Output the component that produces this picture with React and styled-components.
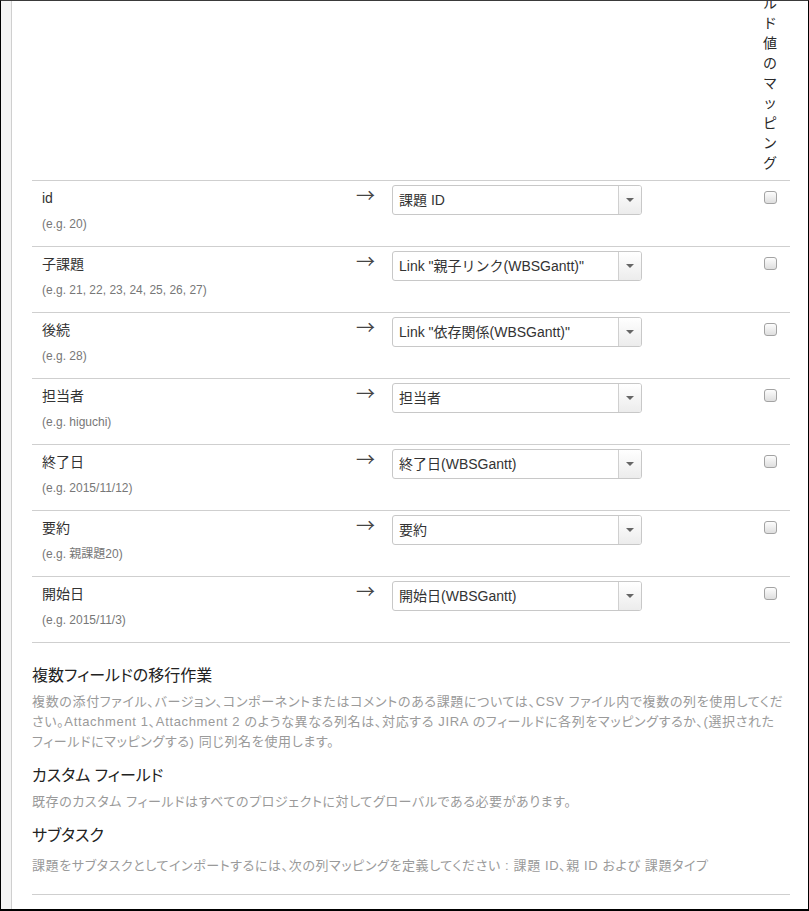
import React from "react";
import styled, { createGlobalStyle } from "styled-components";

const Global = createGlobalStyle`
  html, body { margin: 0; padding: 0; background: #fff; }
  body { font-family: "Liberation Sans", "Noto Sans CJK JP", sans-serif; color: #333; }
  * { box-sizing: border-box; }
`;

const Frame = styled.div`
  width: 809px;
  height: 911px;
  border-top: 1px solid #3a3a3a;
  border-left: 1px solid #000;
  border-right: 1px solid #000;
  border-bottom: 2px solid #000;
  display: flex;
  overflow: hidden;
`;

const Strip = styled.div`
  width: 11px;
  flex: none;
  background: #f4f4f4;
  border-right: 1px solid #cfcfcf;
`;

const Main = styled.div`
  flex: 1;
  padding: 0 18px 0 20px;
  min-width: 0;
`;

const Grid = styled.div`
  display: grid;
  grid-template-columns: 318px 42px 250px 1fr 40px;
  align-items: start;
`;

const HeadRow = styled(Grid)`
  margin-top: -68px;
  padding-bottom: 7px;
`;

const HeadCell = styled.div`
  grid-column: 5;
  justify-self: center;
  width: 16px;
  word-break: break-all;
  text-align: center;
  font-size: 14px;
  line-height: 20px;
  color: #2a2a2a;
`;

const Table = styled.div`
  border-bottom: 1px solid #cfcfcf;
`;

const Row = styled(Grid)`
  border-top: 1px solid #cfcfcf;
  height: 66px;
`;

const LabelCell = styled.div`
  padding: 7px 0 0 10px;
`;

const Label = styled.div`
  font-size: 14px;
  line-height: 20px;
  color: #333;
`;

const Example = styled.div`
  margin-top: 8px;
  font-size: 12px;
  line-height: 16px;
  color: #777;
`;

const Arrow = styled.div`
  padding: 4px 0 0 6px;
  font-family: "Noto Sans CJK JP", "DejaVu Sans", sans-serif;
  font-size: 19px;
  line-height: 20px;
  color: #444;
`;

const Select = styled.div`
  margin-top: 4px;
  height: 30px;
  border: 1px solid #c8c8c8;
  border-radius: 3px;
  display: flex;
  align-items: stretch;
  background: #fff;
  overflow: hidden;
`;

const SelectValue = styled.div`
  flex: 1;
  padding-left: 6px;
  font-size: 14px;
  line-height: 28px;
  color: #333;
  white-space: nowrap;
`;

const SelectButton = styled.div`
  width: 23px;
  flex: none;
  border-left: 1px solid #d0d0d0;
  background: linear-gradient(#ffffff, #ececec);
  display: flex;
  align-items: center;
  justify-content: center;
`;

const Caret = styled.span`
  width: 0;
  height: 0;
  border-left: 4px solid transparent;
  border-right: 4px solid transparent;
  border-top: 4px solid #666;
`;

const CheckCell = styled.div`
  justify-self: center;
  padding-top: 10px;
`;

const Check = styled.input.attrs({ type: "checkbox" })`
  appearance: none;
  -webkit-appearance: none;
  display: block;
  margin: 0;
  width: 13px;
  height: 13px;
  border: 1px solid #a3a3a3;
  border-radius: 3px;
  background: linear-gradient(#fdfdfd, #dedede);
`;

const Section = styled.div`
  padding-top: 9px;
`;

const Heading = styled.h3`
  margin: 14px 0 0;
  font-size: 16px;
  font-weight: normal;
  line-height: 20px;
  color: #222;
  font-feature-settings: "palt";
`;

const Para = styled.p`
  margin: ${(p) => p.$gap || 6}px 0 0;
  font-size: 13px;
  line-height: 20px;
  color: #9a9a9a;
  letter-spacing: ${(p) => p.$ls || 0.5}px;
  white-space: nowrap;
  font-feature-settings: "palt";
`;

const Rule = styled.div`
  margin-top: 18px;
  border-top: 1px solid #cfcfcf;
`;

const rows = [
  { label: "id", ex: "(e.g. 20)", value: "課題 ID" },
  { label: "子課題", ex: "(e.g. 21, 22, 23, 24, 25, 26, 27)", value: 'Link "親子リンク(WBSGantt)"' },
  { label: "後続", ex: "(e.g. 28)", value: 'Link "依存関係(WBSGantt)"' },
  { label: "担当者", ex: "(e.g. higuchi)", value: "担当者" },
  { label: "終了日", ex: "(e.g. 2015/11/12)", value: "終了日(WBSGantt)" },
  { label: "要約", ex: "(e.g. 親課題20)", value: "要約" },
  { label: "開始日", ex: "(e.g. 2015/11/3)", value: "開始日(WBSGantt)" },
];

export default function App() {
  return (
    <>
      <Global />
      <Frame>
        <Strip />
        <Main>
          <HeadRow>
            <HeadCell>フィールド値のマッピング</HeadCell>
          </HeadRow>
          <Table>
            {rows.map((r) => (
              <Row key={r.label}>
                <LabelCell>
                  <Label>{r.label}</Label>
                  <Example>{r.ex}</Example>
                </LabelCell>
                <Arrow>→</Arrow>
                <Select>
                  <SelectValue>{r.value}</SelectValue>
                  <SelectButton>
                    <Caret />
                  </SelectButton>
                </Select>
                <div />
                <CheckCell>
                  <Check />
                </CheckCell>
              </Row>
            ))}
          </Table>
          <Section>
            <Heading>複数フィールドの移行作業</Heading>
            <Para $ls={0.65}>
              複数の添付ファイル、バージョン、コンポーネントまたはコメントのある課題については、CSV ファイル内で複数の列を使用してくだ
              <br />
              さい。Attachment 1、Attachment 2 のような異なる列名は、対応する JIRA のフィールドに各列をマッピングするか、(選択された
              <br />
              フィールドにマッピングする) 同じ列名を使用します。
            </Para>
            <Heading>カスタム フィールド</Heading>
            <Para $ls={0.6}>既存のカスタム フィールドはすべてのプロジェクトに対してグローバルである必要があります。</Para>
            <Heading>サブタスク</Heading>
            <Para $gap={10} $ls={0.6}>
              課題をサブタスクとしてインポートするには、次の列マッピングを定義してください : 課題 ID、親 ID および 課題タイプ
            </Para>
            <Rule />
          </Section>
        </Main>
      </Frame>
    </>
  );
}
